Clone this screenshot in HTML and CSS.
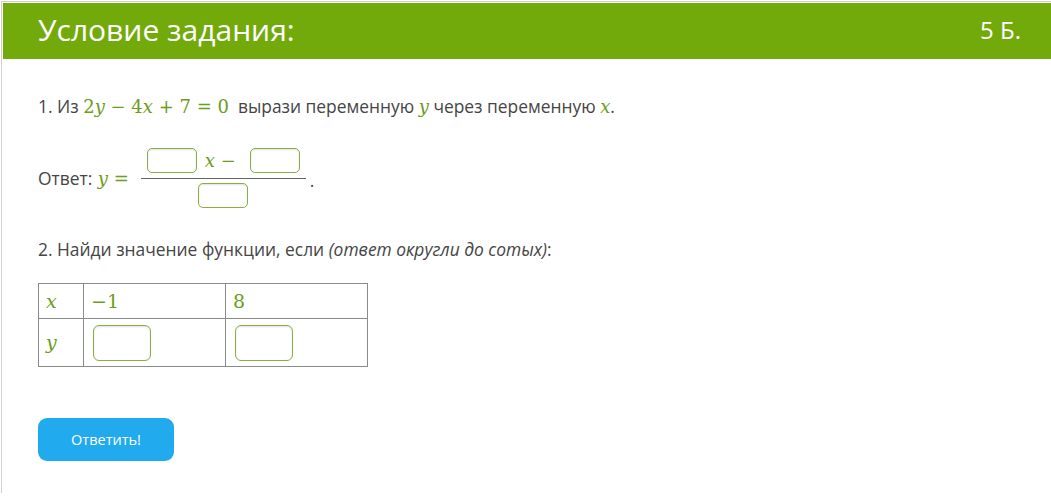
FILE: index.html
```html
<!DOCTYPE html>
<html lang="ru">
<head>
<meta charset="utf-8">
<link rel="stylesheet" href="styles.css">
</head>
<body>
<div class="frame">
  <div class="header">
    <span class="title">Условие задания:</span>
    <span class="points">5 Б.</span>
  </div>
  <div class="content">
    <p class="line q1">1. Из <span class="m">2<i>y</i> − 4<i>x</i> + 7 = 0</span>&nbsp; вырази переменную <span class="m"><i>y</i></span> через переменную <span class="m"><i>x</i></span>.</p>
    <div class="answer">
      <span class="label">Ответ: <span class="m"><i>y</i> =</span></span>
      <span class="frac">
        <span class="num"><span class="box"></span><span class="m"><i>x</i> −</span><span class="box"></span></span>
        <span class="den"><span class="box"></span></span>
      </span>
      <span class="dot">.</span>
    </div>
    <p class="line q2">2. Найди значение функции, если <em>(ответ округли до сотых)</em>:</p>
    <table class="tbl">
      <tr class="r1"><td class="c1"><span class="m"><i>x</i></span></td><td class="c2"><span class="m">−1</span></td><td class="c3"><span class="m">8</span></td></tr>
      <tr class="r2"><td class="c1"><span class="m"><i>y</i></span></td><td class="c2"><span class="inbox"></span></td><td class="c3"><span class="inbox"></span></td></tr>
    </table>
    <button class="btn">Ответить!</button>
  </div>
</div>
</body>
</html>
```
FILE: styles.css
```css
html, body {
  margin: 0;
  padding: 0;
  background: #fff;
}
body {
  font-family: "Open Sans", "Noto Sans", sans-serif;
  color: #454545;
}
.frame {
  margin: 1px 0 0 1px;
  border-left: 1px solid #d0d0d0;
  border-top: 1px solid #d0d0d0;
  padding: 1px 0 0 1px;
  height: 492px;
  box-sizing: border-box;
}
.header {
  height: 56px;
  box-sizing: border-box;
  background: #72aa0c;
  color: #fff;
  display: flex;
  align-items: center;
  justify-content: space-between;
  padding: 0 30px 4px 35px;
}
.title {
  font-size: 30px;
}
.points {
  font-size: 24px;
}
.content {
  padding: 35px 0 0 35px;
}
.line {
  margin: 0;
  font-size: 17.4px;
  line-height: 24px;
}
.m {
  font-family: "DejaVu Serif", "Liberation Serif", serif;
  color: #6c9c20;
  font-size: 18px;
}
.m i {
  font-style: italic;
}
.answer {
  margin-top: 27px;
  display: flex;
  align-items: center;
  font-size: 17.4px;
  height: 64px;
}
.label .m {
  margin-left: 1px;
}
.frac {
  display: inline-flex;
  flex-direction: column;
  align-items: center;
  margin-left: 12px;
  width: 165px;
}
.num {
  display: flex;
  align-items: center;
  gap: 8px;
  padding-bottom: 5px;
  border-bottom: 1px solid #666;
  width: 100%;
  justify-content: center;
}
.num .m {
  margin-right: 6px;
}
.den {
  padding-top: 4px;
  display: flex;
}
.box {
  display: inline-block;
  width: 48px;
  height: 23px;
  border: 1px solid #88b040;
  border-radius: 5px;
  box-shadow: inset 0 1px 2px rgba(0,0,0,0.12);
}
.dot {
  margin-left: 4px;
  margin-top: 4px;
}
.q2 {
  margin-top: 27px;
}
.tbl {
  margin-top: 22px;
  border-collapse: collapse;
}
.tbl td {
  border: 1px solid #8a8a8a;
  padding: 0 0 0 7px;
  vertical-align: middle;
}
.tbl .m {
  font-size: 19px;
}
.r1 td { height: 34px; }
.r2 td { height: 47px; }
.c1 { width: 37px; }
.c2, .c3 { width: 134px; }
.inbox {
  display: block;
  width: 56px;
  height: 34px;
  margin-left: 2px;
  border: 1px solid #88b040;
  border-radius: 6px;
  box-shadow: inset 0 1px 2px rgba(0,0,0,0.12);
}
.btn {
  display: block;
  margin-top: 51px;
  width: 136px;
  height: 43px;
  border: none;
  border-radius: 9px;
  background: #22aaee;
  color: #fff;
  font-family: "Open Sans", "Noto Sans", sans-serif;
  font-size: 14.5px;
  padding: 0;
}
```
